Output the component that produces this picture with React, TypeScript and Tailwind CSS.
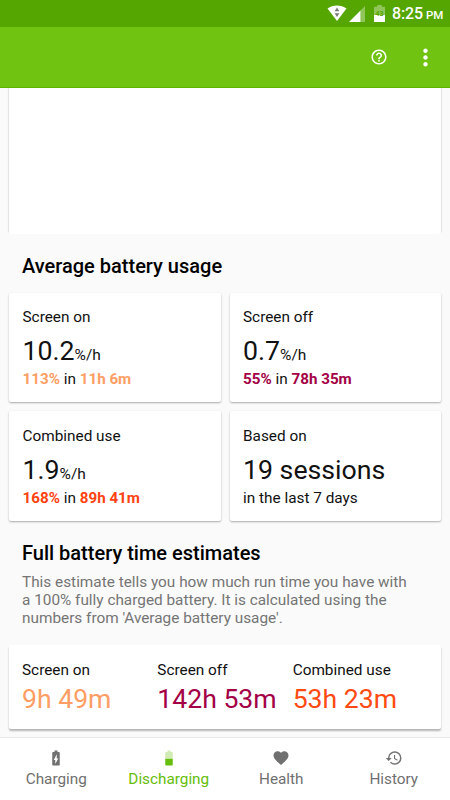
import type { ReactNode } from "react";
import {
  MdBattery50,
  MdBatteryChargingFull,
  MdFavorite,
  MdHelpOutline,
  MdHistory,
  MdMoreVert,
} from "react-icons/md";

function StatusBar() {
  return (
    <div className="flex h-[27px] shrink-0 items-center bg-[#55a600] pl-[327px] text-white">
      <svg width="20" height="17" viewBox="0 0 20 17" className="shrink-0">
        <path d="M0.5 3.6C6 -0.6 14 -0.6 19.5 3.6L10 16Z" fill="currentColor" />
        <path d="M10 2.5l2.3 3.7H7.7zM10 12l2.3-3.7H7.7z" fill="#777" />
      </svg>
      <svg width="16" height="16" viewBox="0 0 16 16" className="ml-[2px] shrink-0">
        <path d="M11.5 4.5L16 0v16h-4.5z" fill="currentColor" fillOpacity="0.35" />
        <path d="M0 16L11.5 4.5V16z" fill="currentColor" />
      </svg>
      <svg width="11" height="17" viewBox="0 0 11 17" className="ml-[9px] shrink-0">
        <path d="M3.2 0h4.6v1.7H11V10H0V1.7h3.2z" fill="currentColor" fillOpacity="0.35" />
        <path d="M0 10h11v7H0z" fill="currentColor" />
        <text x="5.5" y="11.2" textAnchor="middle" fontSize="7" fontWeight="700" fill="#55a600">
          43
        </text>
      </svg>
      <span className="ml-[7px] mt-px whitespace-nowrap text-[16px] font-medium leading-none tracking-[-0.1px]">
        8:25<span className="ml-[3px] text-[11.5px]">PM</span>
      </span>
    </div>
  );
}

type UsageCardProps = {
  title: string;
  value: string;
  unit?: string;
  children: ReactNode;
};

function UsageCard({ title, value, unit, children }: UsageCardProps) {
  return (
    <div className="h-[109.5px] rounded-[2px] bg-white px-[13.5px] pt-[15.5px] shadow-[0_1px_2px_rgba(0,0,0,0.32)]">
      <div className="text-[15.35px] leading-[18px]">{title}</div>
      <div className="mt-[8px] h-[34px] text-[26.7px] leading-[34px]">
        {value}
        {unit ? <span className="text-[15.5px] leading-none">{unit}</span> : null}
      </div>
      <div className="mt-[2px] text-[15.35px] leading-[18px]">{children}</div>
    </div>
  );
}

function Strong({ className, children }: { className: string; children: ReactNode }) {
  return <b className={`text-[15.2px] font-bold ${className}`}>{children}</b>;
}

const estimates = [
  { label: "Screen on", value: "9h 49m", color: "text-[#ff9e64]" },
  { label: "Screen off", value: "142h 53m", color: "text-[#a30045]" },
  { label: "Combined use", value: "53h 23m", color: "text-[#ff4a12]" },
];

const tabs = [
  { label: "Charging", icon: MdBatteryChargingFull },
  { label: "Discharging", icon: MdBattery50, active: true },
  { label: "Health", icon: MdFavorite },
  { label: "History", icon: MdHistory },
];

export default function App() {
  return (
    <div className="flex h-[800px] w-[450px] flex-col overflow-hidden bg-[#fafafa] font-['Roboto',sans-serif] text-[#111]">
      <StatusBar />
      <header className="z-10 flex h-[61px] shrink-0 items-center justify-end border-b border-[#5cb400] bg-[#70c411] pr-[11px] text-white">
        <button type="button" aria-label="Help" className="mr-[24px]">
          <MdHelpOutline className="h-[18px] w-[18px]" />
        </button>
        <button type="button" aria-label="More">
          <MdMoreVert className="h-[27px] w-[27px]" />
        </button>
      </header>

      <main className="h-[650px] shrink-0 px-[9px]">
        <div className="h-[146px] rounded-b-[2px] bg-white shadow-[1px_-1px_1px_rgba(0,0,0,0.1),-1px_-1px_1px_rgba(0,0,0,0.1)]" />

        <h2 className="mt-[20px] px-[13px] text-[20px] font-medium leading-6 text-black">
          Average battery usage
        </h2>
        <div className="mt-[14.5px] grid grid-cols-2 gap-[9px]">
          <UsageCard title="Screen on" value="10.2" unit="%/h">
            <Strong className="text-[#ff9e64]">113%</Strong> in{" "}
            <Strong className="text-[#ff9e64]">11h 6m</Strong>
          </UsageCard>
          <UsageCard title="Screen off" value="0.7" unit="%/h">
            <Strong className="text-[#a30045]">55%</Strong> in{" "}
            <Strong className="text-[#a30045]">78h 35m</Strong>
          </UsageCard>
          <UsageCard title="Combined use" value="1.9" unit="%/h">
            <Strong className="text-[#ff4212]">168%</Strong> in{" "}
            <Strong className="text-[#ff4212]">89h 41m</Strong>
          </UsageCard>
          <UsageCard title="Based on" value="19 sessions">
            in the last 7 days
          </UsageCard>
        </div>

        <h2 className="mt-[20.5px] px-[13px] text-[20px] font-medium leading-6 text-black">
          Full battery time estimates
        </h2>
        <p className="mt-[8px] whitespace-nowrap px-[13px] text-[15.35px] leading-[18px] text-[#757575]">
          This estimate tells you how much run time you have with
          <br />a 100% fully charged battery. It is calculated using the
          <br />
          numbers from 'Average battery usage'.
        </p>
        <div className="mt-[18px] grid h-[84px] grid-cols-3 rounded-[2px] bg-white px-[13px] pt-[16px] shadow-[0_2px_2px_rgba(0,0,0,0.28)]">
          {estimates.map((item) => (
            <div key={item.label} className="whitespace-nowrap">
              <div className="text-[15.35px] leading-[18px]">{item.label}</div>
              <div className={`mt-[3px] text-[26.6px] leading-[34px] ${item.color}`}>
                {item.value}
              </div>
            </div>
          ))}
        </div>
      </main>

      <nav className="grid h-[62px] shrink-0 grid-cols-4 bg-white pt-[11px] shadow-[0_-1px_1px_rgba(0,0,0,0.06)]">
        {tabs.map(({ label, icon: Icon, active }) => (
          <div
            key={label}
            className={`flex flex-col items-center ${active ? "text-[#66bd0b]" : "text-[#707070]"}`}
          >
            <Icon className="h-[18px] w-[18px]" />
            <span className="mt-[3px] text-[15.3px] leading-[18px]">{label}</span>
          </div>
        ))}
      </nav>
    </div>
  );
}
